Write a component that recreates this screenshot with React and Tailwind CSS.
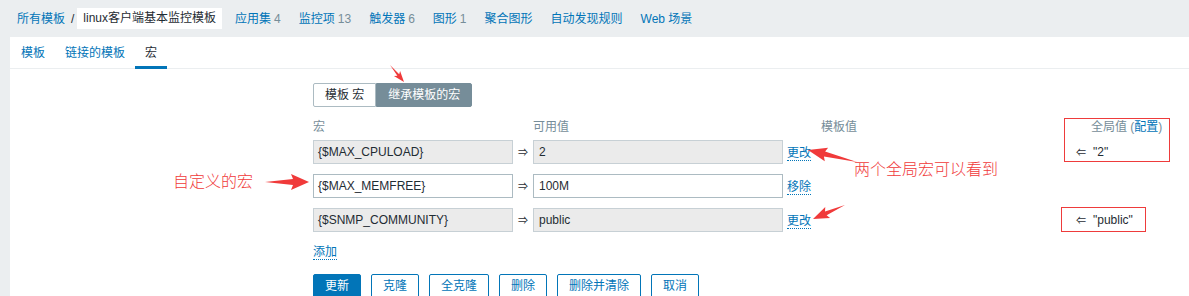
import React from 'react';

const RED = '#f03a3a';

const navItems = [
  { label: '应用集', count: '4' },
  { label: '监控项', count: '13' },
  { label: '触发器', count: '6' },
  { label: '图形', count: '1' },
  { label: '聚合图形' },
  { label: '自动发现规则' },
  { label: 'Web 场景' },
];

const macros = [
  { macro: '{$MAX_CPULOAD}', value: '2', inherited: true, action: '更改', global: '"2"' },
  { macro: '{$MAX_MEMFREE}', value: '100M', inherited: false, action: '移除' },
  { macro: '{$SNMP_COMMUNITY}', value: 'public', inherited: true, action: '更改', global: '"public"' },
];

const buttons = ['更新', '克隆', '全克隆', '删除', '删除并清除', '取消'];

// annotation arrow: thin tail widening into a head at the tip
function arrowPoints(tx, ty, px, py, L, W, w) {
  const dx = px - tx;
  const dy = py - ty;
  const len = Math.hypot(dx, dy);
  const ux = dx / len;
  const uy = dy / len;
  const nx = -uy;
  const ny = ux;
  const bx = px - ux * L;
  const by = py - uy * L;
  const pts = [
    [tx, ty],
    [bx + nx * w, by + ny * w],
    [bx - ux * 2 + nx * W, by - uy * 2 + ny * W],
    [px, py],
    [bx - ux * 2 - nx * W, by - uy * 2 - ny * W],
    [bx - nx * w, by - ny * w],
  ];
  return pts.map((p) => p.join(',')).join(' ');
}

const Link = ({ children }) => (
  <span className="inline-block border-b border-dotted border-[#0275b8] leading-[14px] text-[#0275b8]">
    {children}
  </span>
);

export default function App() {
  return (
    <div className="relative flex h-[296px] w-full flex-col overflow-hidden bg-[#ebeef0] font-['Liberation_Sans','Noto_Sans_CJK_SC',sans-serif] text-[12px] text-[#1f2c33]">
      {/* breadcrumb + header nav */}
      <div className="flex h-[37px] shrink-0 items-center pl-[17px]">
        <span className="text-[#0275b8]">所有模板</span>
        <span className="ml-[6px] mr-[3px]">/</span>
        <span className="h-[21px] bg-white px-[6px] leading-[21px]">linux客户端基本监控模板</span>
        <div className="ml-[13px] flex gap-[18px]">
          {navItems.map((item) => (
            <span key={item.label} className="text-[#0275b8]">
              {item.label}
              {item.count && <span className="ml-[3px] text-[#768d99]">{item.count}</span>}
            </span>
          ))}
        </div>
      </div>

      <div className="ml-[10px] flex-1 bg-white">
        {/* tabs */}
        <div className="flex h-[32px] border-b border-[#ebeef0] pl-px">
          <span className="flex items-center px-[10px] text-[#0275b8]">模板</span>
          <span className="flex items-center px-[10px] text-[#0275b8]">链接的模板</span>
          <span className="-mb-px flex items-center border-b-[3px] border-[#0275b8] px-[10px] pt-[3px]">宏</span>
        </div>

        <div className="pl-[303px] pt-[14px]">
          {/* segmented switch */}
          <div className="flex h-[24px]">
            <span className="rounded-l-[2px] border border-[#acbbc2] px-[11px] leading-[22px]">模板 宏</span>
            <span className="rounded-r-[2px] border border-[#768d99] bg-[#768d99] px-[11px] leading-[22px] text-white">
              继承模板的宏
            </span>
          </div>

          {/* column headers */}
          <div className="mt-[11px] flex h-[18px] leading-[18px] text-[#768d99]">
            <span className="w-[220px]">宏</span>
            <span className="w-[288px]">可用值</span>
            <span className="w-[254px]">模板值</span>
            <span className="pl-[16px]">
              全局值 (<span className="text-[#0275b8]">配置</span>)
            </span>
          </div>

          {/* macro rows */}
          <div className="mt-[4px] flex flex-col gap-[10px]">
            {macros.map((m) => (
              <div key={m.macro} className="flex h-[24px] items-center">
                <div
                  className={
                    m.inherited
                      ? 'h-[24px] w-[200px] border border-[#c7d0d5] bg-[#ebebeb] pl-[4px] leading-[22px]'
                      : 'h-[24px] w-[200px] border border-[#acbbc2] bg-white pl-[4px] leading-[22px]'
                  }
                >
                  {m.macro}
                </div>
                <span className="w-[20px] text-center text-[10px]">⇒</span>
                <div
                  className={
                    m.inherited
                      ? 'h-[24px] w-[250px] border border-[#c7d0d5] bg-[#ebebeb] pl-[5px] leading-[22px]'
                      : 'h-[24px] w-[250px] border border-[#acbbc2] bg-white pl-[5px] leading-[22px]'
                  }
                >
                  {m.value}
                </div>
                <span className="w-[38px] pl-[4px] pt-[2px]">
                  <Link>{m.action}</Link>
                </span>
                <span className="w-[254px]" />
                {m.global && (
                  <span className="flex items-center pl-px">
                    <span className="text-[10px]">⇐</span>
                    <span className="ml-[7px]">{m.global}</span>
                  </span>
                )}
              </div>
            ))}
          </div>

          <div className="mt-[11px] leading-[18px]">
            <Link>添加</Link>
          </div>

          <div className="mt-[13px] flex gap-[10px]">
            {buttons.map((b, i) => (
              <span
                key={b}
                className={
                  i === 0
                    ? 'h-[24px] rounded-[2px] border border-[#0275b8] bg-[#0275b8] px-[11px] leading-[22px] text-white'
                    : 'h-[24px] rounded-[2px] border border-[#0275b8] bg-white px-[11px] leading-[22px] text-[#0275b8]'
                }
              >
                {b}
              </span>
            ))}
          </div>
        </div>
      </div>

      {/* red annotations drawn over the screenshot */}
      <div className="pointer-events-none absolute left-[1064px] top-[118px] h-[44px] w-[106px] border border-[#ee3b3b]" />
      <div className="pointer-events-none absolute left-[1061px] top-[207px] h-[25px] w-[85px] border border-[#ee3b3b]" />
      <span className="absolute left-[173px] top-[172px] text-[16px] font-light leading-[20px] text-[#f03a3a]">自定义的宏</span>
      <span className="absolute left-[854px] top-[160px] text-[16px] font-light leading-[20px] text-[#f03a3a]">两个全局宏可以看到</span>
      <svg className="pointer-events-none absolute left-0 top-0" width="1189" height="296">
        <polygon points={arrowPoints(265, 182, 309, 182, 16, 8, 3)} fill={RED} />
        <polygon points={arrowPoints(857, 162, 808, 150, 17, 7, 2.5)} fill={RED} />
        <polygon points={arrowPoints(845, 205, 813, 219, 14, 6, 2)} fill={RED} />
        <polygon points={arrowPoints(390, 65, 404, 82, 9, 4, 1.2)} fill={RED} />
      </svg>
    </div>
  );
}
